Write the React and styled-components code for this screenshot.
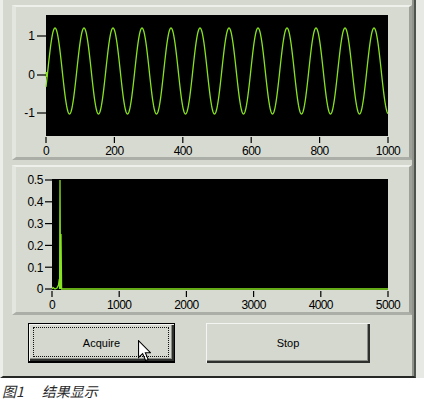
import React from "react";
import styled, { createGlobalStyle } from "styled-components";

const GlobalStyle = createGlobalStyle`
  html, body {
    margin: 0;
    padding: 0;
    background: #ffffff;
  }
  body {
    font-family: "Liberation Sans", Arial, sans-serif;
  }
`;

const Page = styled.div`
  width: 424px;
  height: 410px;
  display: flex;
  flex-direction: column;
`;

const Frame = styled.div`
  width: 424px;
  height: 378px;
  background: #e7eae4;
  display: flex;
`;

const Window = styled.div`
  box-sizing: border-box;
  width: 416px;
  height: 378px;
  background: #d4d8cf;
  border-left: 3px solid #eceee9;
  border-right: 2px solid #4f534d;
  border-bottom: 2px solid #262826;
  box-shadow: inset -2px 0 0 #8f938c;
  padding: 5px 2px 0 9px;
  display: flex;
  flex-direction: column;
  gap: 5px;
`;

const Panel = styled.div`
  box-sizing: border-box;
  width: 400px;
  height: ${(p) => p.$h}px;
  background: #d6dad1;
  border-top: 2px solid #eef0eb;
  border-left: 4px solid #e3e6df;
  border-right: 3px solid #9da19a;
  border-bottom: 3px solid #aaaea6;
  display: flex;
`;

const Chart = styled.svg`
  display: block;
  width: 393px;
  height: ${(p) => p.$h}px;
  overflow: visible;
  font-family: "Liberation Sans", Arial, sans-serif;
  font-size: 12px;
`;

const ButtonRow = styled.div`
  display: flex;
  gap: 31px;
  margin: 3px 0 0 16px;
`;

const Button = styled.button`
  position: relative;
  box-sizing: border-box;
  width: ${(p) => p.$w}px;
  height: 40px;
  padding: 0;
  background: #d4d8cf;
  color: #000;
  font-family: "Liberation Sans", Arial, sans-serif;
  font-size: 11px;
  border: ${(p) => (p.$default ? "1px solid #000" : "none")};
  border-bottom-width: ${(p) => (p.$default ? "2px" : "0")};
  box-shadow: inset 1px 1px 0 #f4f5f2, inset -2px -2px 0 #2e302d,
    inset -3px -3px 0 #8a8e87;
  cursor: default;

  &::after {
    content: "";
    display: ${(p) => (p.$default ? "block" : "none")};
    position: absolute;
    inset: 3px 5px 4px 4px;
    border: 1px dotted #111;
  }
`;

const Cursor = styled.svg`
  position: absolute;
  left: 109px;
  top: 16px;
  width: 13px;
  height: 22px;
`;

const Caption = styled.div`
  margin: 5px 0 0 2px;
  font-family: "Noto Sans CJK SC", "Noto Sans", sans-serif;
  font-size: 14px;
  line-height: 16px;
  font-style: italic;
  color: #2a2a2a;
  display: flex;
  gap: 18px;
`;

const GREEN = "#86e31f";

function sinePoints() {
  const pts = [];
  for (let x = 46; x <= 388; x += 0.5) {
    const y = 71 - 43 * Math.cos((2 * Math.PI * (x - 55)) / 29);
    pts.push(`${x.toFixed(1)},${y.toFixed(2)}`);
  }
  return pts.join(" ");
}

const timeY = [
  { v: "1", y: 36 },
  { v: "0", y: 75 },
  { v: "-1", y: 113 },
];
const timeX = [0, 200, 400, 600, 800, 1000].map((v, i) => ({
  v,
  x: 46 + i * 68.4,
}));

const specY = [0.5, 0.4, 0.3, 0.2, 0.1, 0].map((v) => ({
  v: v === 0 ? "0" : v.toFixed(1),
  y: 289 - v * 218,
}));
const specX = [0, 1000, 2000, 3000, 4000, 5000].map((v, i) => ({
  v,
  x: 52 + i * 67.2,
}));

const spectrum =
  "52,289 53,287.5 55,289 57,288 58.5,285 59.3,279 59.6,289 60,180 60.5,289 61,234 61.6,289 388,289";

function TimeGraph() {
  return (
    <Chart viewBox="16 7 393 150" $h={150}>
      <rect x="46" y="15" width="342" height="121" fill="#000" />
      <polyline
        points={sinePoints()}
        fill="none"
        stroke={GREEN}
        strokeWidth="1.3"
      />
      <line x1="46.5" y1="72" x2="46.5" y2="77" stroke={GREEN} strokeWidth="2" />
      {timeY.map((t) => (
        <g key={t.v}>
          <line x1="37" y1={t.y} x2="46" y2={t.y} stroke="#000" strokeWidth="1.2" />
          <text x="35" y={t.y + 4.3} textAnchor="end" fill="#000">
            {t.v}
          </text>
        </g>
      ))}
      {timeX.map((t) => (
        <g key={t.v}>
          <line x1={t.x} y1="137" x2={t.x} y2="143" stroke="#000" strokeWidth="1.2" />
          <text
            x={t.x}
            y="155"
            textAnchor="middle"
            fill="#000"
            letterSpacing="-0.6"
          >
            {t.v}
          </text>
        </g>
      ))}
    </Chart>
  );
}

function SpectrumGraph() {
  return (
    <Chart viewBox="16 167 393 145" $h={145}>
      <rect x="52" y="179" width="336" height="111" fill="#000" />
      <polyline
        points={spectrum}
        fill="none"
        stroke={GREEN}
        strokeWidth="1.3"
      />
      {specY.map((t) => (
        <g key={t.v}>
          <line x1="45" y1={t.y} x2="52" y2={t.y} stroke="#000" strokeWidth="1.2" />
          <text x="43" y={t.y + 4.3} textAnchor="end" fill="#000" letterSpacing="-0.4">
            {t.v}
          </text>
        </g>
      ))}
      {specX.map((t) => (
        <g key={t.v}>
          <line x1={t.x} y1="291" x2={t.x} y2="297" stroke="#000" strokeWidth="1.2" />
          <text
            x={t.x}
            y="309"
            textAnchor="middle"
            fill="#000"
            letterSpacing="-0.6"
          >
            {t.v}
          </text>
        </g>
      ))}
    </Chart>
  );
}

export default function App() {
  return (
    <>
      <GlobalStyle />
      <Page>
        <Frame>
          <Window>
            <Panel $h={155}>
              <TimeGraph />
            </Panel>
            <Panel $h={150}>
              <SpectrumGraph />
            </Panel>
            <ButtonRow>
              <Button $w={147} $default>
                Acquire
                <Cursor viewBox="0 0 12 20">
                  <path
                    d="M0.5 0.5 L0.5 16 L4.3 12.4 L7 18.8 L9.4 17.8 L6.8 11.6 L11.5 11.6 Z"
                    fill="#fff"
                    stroke="#000"
                    strokeWidth="1"
                    strokeLinejoin="miter"
                  />
                </Cursor>
              </Button>
              <Button $w={164}>Stop</Button>
            </ButtonRow>
          </Window>
        </Frame>
        <Caption>
          <span>图1</span>
          <span>结果显示</span>
        </Caption>
      </Page>
    </>
  );
}
